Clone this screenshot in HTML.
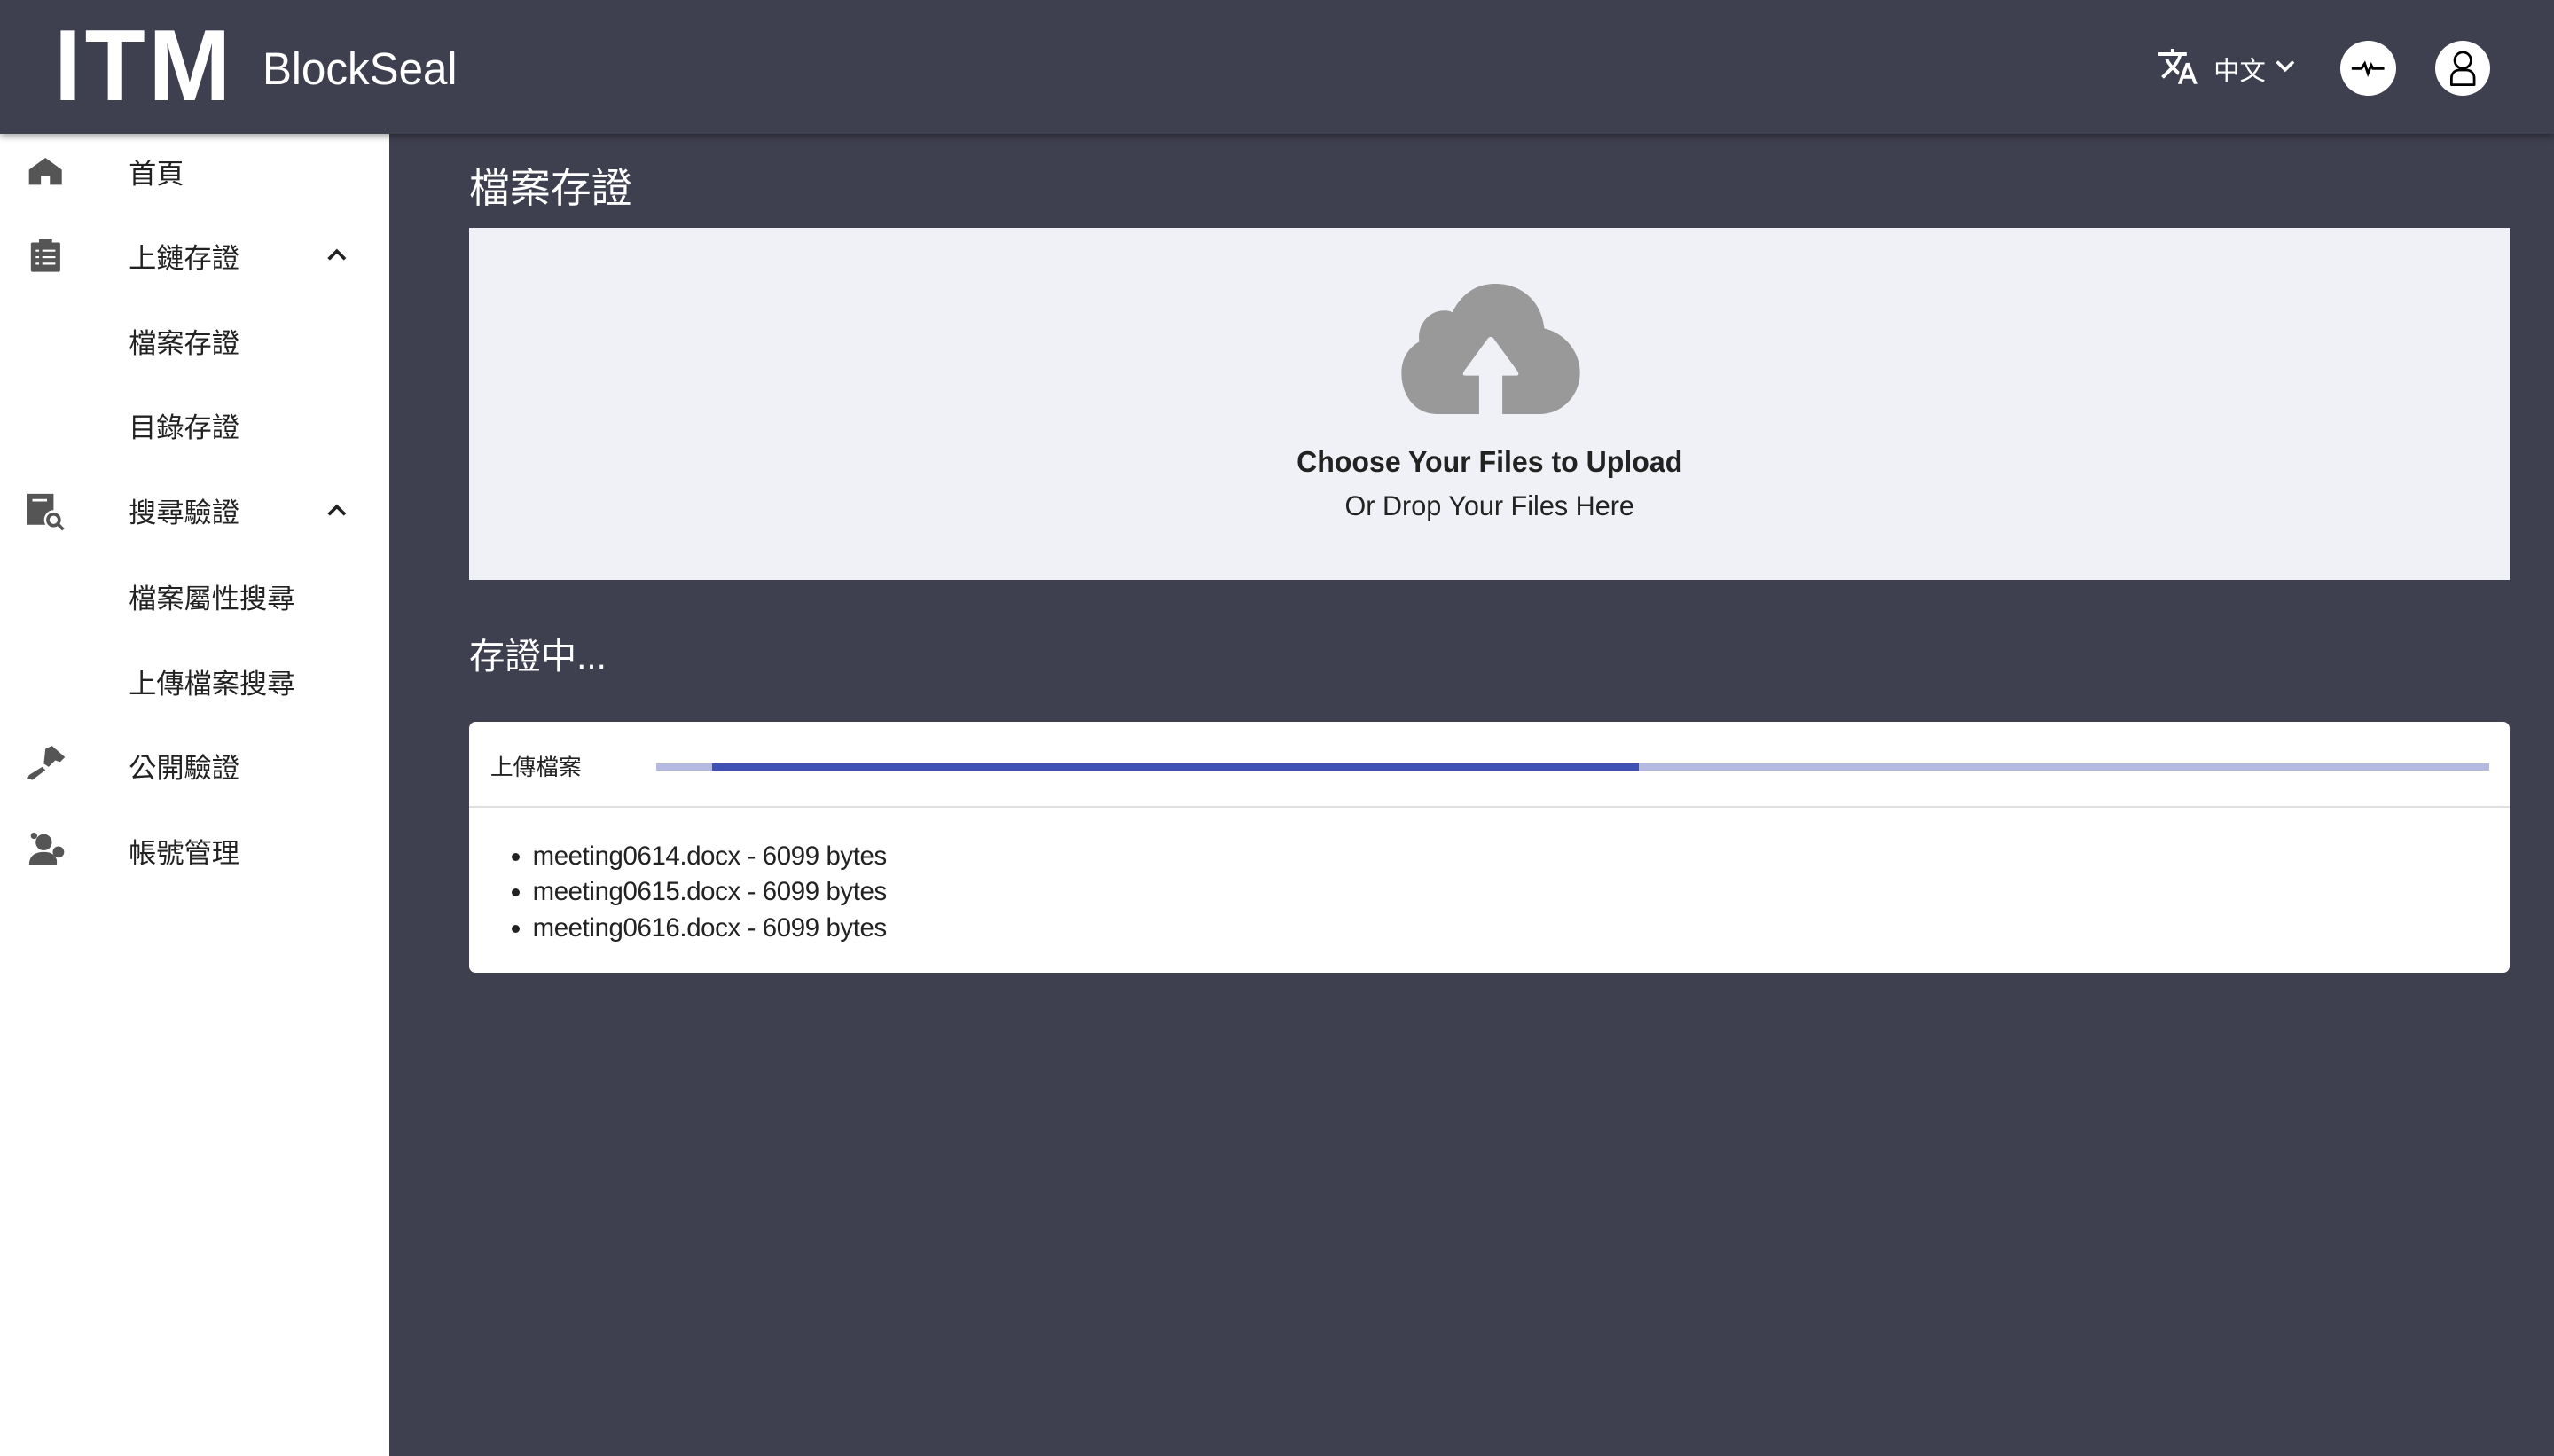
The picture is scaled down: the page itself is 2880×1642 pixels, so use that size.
<!DOCTYPE html>
<html><head><meta charset="utf-8"><style>
html,body{margin:0;padding:0;width:2880px;height:1642px;overflow:hidden;background:#3e3f4f}
#w{zoom:1.83673;width:1568px;height:894px;position:relative;font-family:"Liberation Sans","Noto Sans CJK TC",sans-serif}
.hdr{position:absolute;left:0;top:0;width:1568px;height:82px;background:#3e3f4f;box-shadow:0 2px 4px rgba(0,0,0,.35);z-index:2}
.side{position:absolute;left:0;top:82px;width:239px;height:812px;background:#fff}
.it{position:absolute;left:79px;font-size:17px;color:#222}
.ic{position:absolute;left:17px}
.car{position:absolute;left:200px;width:14px;height:14px}
.t{position:absolute;color:#fff}
</style></head><body><div id="w">
<div class="hdr">
 <div class="t" style="left:33px;top:6px;font-size:62px;font-weight:bold;letter-spacing:2px;line-height:70px;font-family:'Liberation Sans',sans-serif;transform:scaleX(0.98);transform-origin:left">ITM</div>
 <div class="t" style="left:161px;top:25px;font-size:28px;line-height:34px;transform:scaleX(0.96);transform-origin:left">BlockSeal</div>
 <svg style="position:absolute;left:1324px;top:28px" width="26" height="26" viewBox="0 0 24 24"><path fill="#fff" d="M12.87 15.07l-2.54-2.51.03-.03A17.5 17.5 0 0014.07 6H17V4h-7V2H8v2H1v2h11.17C11.5 7.92 10.44 9.75 9 11.35 8.07 10.32 7.3 9.19 6.69 8h-2c.73 1.63 1.73 3.17 2.98 4.56l-5.09 5.02L4 19l5-5 3.11 3.11.76-2.04zM18.5 10h-2L12 22h2l1.12-3h4.75L21 22h2l-4.5-12zm-2.62 7l1.62-4.33L19.12 17h-3.24z"/></svg>
 <div class="t" style="left:1359px;top:31px;font-size:16px">中文</div>
 <svg style="position:absolute;left:1396px;top:35px" width="14" height="12" viewBox="0 0 14 12"><path d="M2 3l5 5 5-5" stroke="#fff" stroke-width="2" fill="none"/></svg>
 <div style="position:absolute;left:1437px;top:25px;width:34px;height:34px;border-radius:50%;background:#fff"></div>
 <svg style="position:absolute;left:1437px;top:25px" width="34" height="34" viewBox="0 0 34 34"><path d="M7 17h6l2-3 2 6 2-5 1 2h7" stroke="#000" stroke-width="1.6" fill="none"/></svg>
 <div style="position:absolute;left:1495px;top:25px;width:34px;height:34px;border-radius:50%;background:#fff"></div>
 <svg style="position:absolute;left:1495px;top:25px" width="34" height="34" viewBox="0 0 34 34"><circle cx="17" cy="12" r="5" stroke="#000" stroke-width="1.5" fill="none"/><path d="M10 27v-4c0-3 2-5 5-5h4c3 0 5 2 5 5v4z" stroke="#000" stroke-width="1.5" fill="none" stroke-linejoin="round"/></svg>
</div>
<div class="side">
 <svg class="ic" style="top:12px" width="22" height="22" viewBox="0 0 24 24"><path fill="#555" d="M12 3L1 11v10h8v-6h6v6h8V11z"/></svg>
 <div class="it" style="top:11px">首頁</div>
 <svg class="ic" style="top:64px;left:18px" width="20" height="22" viewBox="0 0 20 22"><rect x="1" y="3" width="18" height="18" rx="1" fill="#555"/><rect x="6" y="1" width="8" height="4" fill="#555"/><path d="M4 8h2M4 12h2M4 16h2M8 8h8M8 12h8M8 16h8" stroke="#fff" stroke-width="1.2"/></svg>
 <div class="it" style="top:63px">上鏈存證</div>
 <svg class="car" style="top:67px" viewBox="0 0 14 14"><path d="M2 10l5-5 5 5" stroke="#222" stroke-width="2" fill="none"/></svg>
 <div class="it" style="top:115px">檔案存證</div>
 <div class="it" style="top:167px">目錄存證</div>
 <svg class="ic" style="top:220px" width="24" height="24" viewBox="0 0 24 24"><path fill="#555" d="M0 1h16v10a6 6 0 00-5 9H0z"/><path d="M3 5h9" stroke="#fff" stroke-width="1.5"/><circle cx="16" cy="17" r="3.5" stroke="#555" stroke-width="2" fill="none"/><path d="M18.5 19.5L22 23" stroke="#555" stroke-width="2"/></svg>
 <div class="it" style="top:219px">搜尋驗證</div>
 <svg class="car" style="top:224px" viewBox="0 0 14 14"><path d="M2 10l5-5 5 5" stroke="#222" stroke-width="2" fill="none"/></svg>
 <div class="it" style="top:272px">檔案屬性搜尋</div>
 <div class="it" style="top:324px">上傳檔案搜尋</div>
 <svg class="ic" style="top:376px" width="24" height="22" viewBox="0 0 24 22"><path fill="#555" d="M11 2l4-2 8 7-3 3-3-1-4 4-3-2zM9 13l2 2-8 6-3-1 1-2z"/></svg>
 <div class="it" style="top:376px">公開驗證</div>
 <svg class="ic" style="top:428px" width="24" height="22" viewBox="0 0 24 22"><circle cx="10" cy="7" r="5" fill="#555"/><path fill="#555" d="M1 21c0-6 4-8 9-8s7 2 8 5v3z"/><circle cx="19" cy="13" r="3.5" fill="#555"/><circle cx="4" cy="3" r="2" fill="#555"/></svg>
 <div class="it" style="top:428px">帳號管理</div>
</div>
<div class="t" style="left:288px;top:96px;font-size:25px">檔案存證</div>
<div style="position:absolute;left:288px;top:140px;width:1253px;height:216px;background:#f0f1f6"></div>
<svg style="position:absolute;left:860px;top:174px" width="110" height="80" viewBox="0 0 200 146"><path fill="#999" d="M40 146C15 146 0 125 0 100c0-18 10-30 20-35-3-18 10-35 28-35 5 0 7 1 9 2C68 10 85 0 105 0c30 0 52 20 55 50 22 5 40 25 40 50 0 25-20 46-45 46z"/><path fill="#f0f1f6" d="M87 146V103H72q-5 0-2-5l27-37q3-3 6 0l27 37q3 5-2 5H113v43z"/></svg>
<div style="position:absolute;left:288px;width:1253px;top:274px;text-align:center;font-size:18px;font-weight:bold;color:#222;transform:scaleX(0.97)">Choose Your Files to Upload</div>
<div style="position:absolute;left:288px;width:1253px;top:301px;text-align:center;font-size:17px;color:#222;transform:scaleX(0.98)">Or Drop Your Files Here</div>
<div class="t" style="left:288px;top:385px;font-size:22px">存證中...</div>
<div style="position:absolute;left:288px;top:443px;width:1253px;height:154px;background:#fff;border-radius:4px">
 <div style="position:absolute;left:13px;top:17px;font-size:14px;color:#222">上傳檔案</div>
 <div style="position:absolute;left:115px;top:26px;width:1125px;height:4px;background:#b4b9e0"></div>
 <div style="position:absolute;left:149px;top:26px;width:569px;height:4px;background:#3f51b5"></div>
 <div style="position:absolute;left:0;top:52px;width:1253px;height:1px;background:#e0e0e0"></div>
 <ul style="position:absolute;left:0;top:72px;margin:0;padding-left:39px;font-size:16px;line-height:22px;color:#222;letter-spacing:-0.2px">
  <li style="padding-left:0">meeting0614.docx - 6099 bytes</li><li>meeting0615.docx - 6099 bytes</li><li>meeting0616.docx - 6099 bytes</li></ul>
</div>
</div></body></html>
